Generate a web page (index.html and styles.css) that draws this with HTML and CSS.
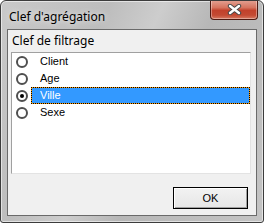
FILE: index.html
```html
<!DOCTYPE html>
<html>
<head>
  <meta charset="UTF-8">
  <title>Clef d'agrégation</title>
  <link rel="stylesheet" href="styles.css">
</head>
<body>
  <div class="window">
    <div class="titlebar">
      <span class="title">Clef d'agrégation</span>
      <button class="close-btn" title="Fermer">
        <svg width="17" height="11" viewBox="0 0 17 11">
          <path d="M4 2 L13 9 M13 2 L4 9" stroke="#4a4a4a" stroke-width="4.4" stroke-linecap="round"/>
          <path d="M4 2 L13 9 M13 2 L4 9" stroke="#ffffff" stroke-width="2.4" stroke-linecap="round"/>
        </svg>
      </button>
    </div>

    <div class="client">
      <div class="group-label">Clef de filtrage</div>

      <ul class="listbox">
        <li class="item">
          <span class="radio"></span>
          <span class="item-text">Client</span>
        </li>
        <li class="item">
          <span class="radio"></span>
          <span class="item-text">Age</span>
        </li>
        <li class="item selected">
          <span class="radio checked"></span>
          <span class="item-text">Ville</span>
        </li>
        <li class="item">
          <span class="radio"></span>
          <span class="item-text">Sexe</span>
        </li>
      </ul>

      <div class="button-row">
        <button class="ok-btn">OK</button>
      </div>
    </div>
  </div>
</body>
</html>
```

FILE: styles.css
```css
/* Global */
html, body {
  margin: 0;
  padding: 0;
  background: #ffffff;
}
.window {
  width: 264px;
  height: 223px;
  box-sizing: border-box;
  border: 1px solid #3c3c3c;
  border-radius: 6px 6px 3px 3px;
  box-shadow: inset 0 0 0 1px rgba(255, 255, 255, 0.55);
  background: linear-gradient(115deg, #c9c9c9 0%, #bdbdbd 30%, #cdcdcd 45%, #b7b7b7 60%, #c4c4c4 100%);
  display: flex;
  flex-direction: column;
  overflow: hidden;
}
/* Title bar */
.titlebar {
  height: 28px;
  display: flex;
  align-items: flex-start;
  flex-shrink: 0;
}
.title {
  font-family: "Noto Sans", sans-serif;
  font-size: 12px;
  line-height: 16px;
  color: #000000;
  padding: 8px 0 0 8px;
  text-shadow: 0 0 6px rgba(255, 255, 255, 0.9);
}
.close-btn {
  margin: -1px 5px 0 auto;
  width: 48px;
  height: 20px;
  padding: 0;
  border: 1px solid #4e1a12;
  border-top: none;
  border-radius: 0 0 4px 4px;
  background: linear-gradient(#e4a395 0%, #d6745f 40%, #c2412b 55%, #c44a33 80%, #d77a62 100%);
  box-shadow: inset 0 0 0 1px rgba(255, 255, 255, 0.35);
  display: flex;
  align-items: center;
  justify-content: center;
}
/* Client area */
.client {
  flex: 1;
  margin: 0 6px 6px 6px;
  border: 1px solid #6a6a6a;
  background: #f0f0f0;
  display: flex;
  flex-direction: column;
  font-family: "Liberation Sans", Arial, sans-serif;
  font-size: 11px;
}
.group-label {
  height: 22px;
  box-sizing: border-box;
  padding: 3px 0 0 4px;
  font-family: "Noto Sans", sans-serif;
  font-size: 12px;
  line-height: 15px;
  color: #000000;
}
.listbox {
  list-style: none;
  margin: 0 5px 0 3px;
  padding: 0;
  height: 122px;
  box-sizing: border-box;
  border: 1px solid;
  border-color: #a0a0a0 #e3e3e3 #e3e3e3 #a0a0a0;
  background: #ffffff;
}
.item {
  height: 17px;
  display: flex;
  align-items: center;
  padding-left: 4px;
}
.radio {
  width: 12px;
  height: 12px;
  box-sizing: border-box;
  border: 2px solid #4f4f4f;
  border-radius: 50%;
  background: #ffffff;
  position: relative;
  flex-shrink: 0;
}
.radio.checked:after {
  content: "";
  position: absolute;
  left: 2px;
  top: 2px;
  width: 4px;
  height: 4px;
  border-radius: 50%;
  background: #000000;
}
.item-text {
  flex: 1;
  height: 17px;
  line-height: 17px;
  margin-left: 3px;
  padding-left: 9px;
  box-sizing: border-box;
  color: #000000;
}
.selected .item-text {
  background: #3399ff;
  color: #ffffff;
  outline: 1px dotted #000000;
  outline-offset: -1px;
  box-shadow: inset 0 0 0 1px #ff9a00;
}
/* Bottom buttons */
.button-row {
  margin-top: auto;
  display: flex;
  justify-content: flex-end;
  padding: 0 8px 6px 0;
}
.ok-btn {
  width: 75px;
  height: 22px;
  padding: 0;
  border: 1px solid #000000;
  background: linear-gradient(#f2f2f2, #e6e6e6);
  box-shadow: inset 1px 1px 0 #ffffff, inset -1px -1px 0 #a0a0a0;
  font-family: "Liberation Sans", Arial, sans-serif;
  font-size: 11px;
  color: #000000;
}
```
